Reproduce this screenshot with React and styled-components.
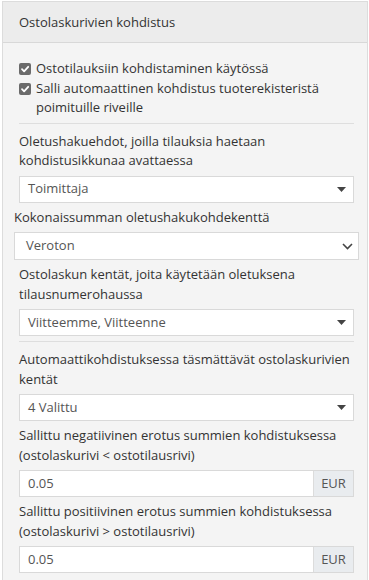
import styled, { createGlobalStyle } from "styled-components"

const GlobalStyle = createGlobalStyle`
  body {
    margin: 0;
    background: #ffffff;
    font-family: "Open Sans", "Liberation Sans", sans-serif;
    font-size: 13px;
    color: #333;
  }
`

function App() {
  return (
    <>
      <GlobalStyle />
      <Panel>
        <PanelHeading>Ostolaskurivien kohdistus</PanelHeading>
        <PanelBody>
          <CheckRow>
            <CheckBox />
            Ostotilauksiin kohdistaminen käytössä
          </CheckRow>
          <CheckRow>
            <CheckBox />
            Salli automaattinen kohdistus tuoterekisteristä poimituille riveille
          </CheckRow>

          <Divider />

          <Label>Oletushakuehdot, joilla tilauksia haetaan kohdistusikkunaa avattaessa</Label>
          <Select>
            <span>Toimittaja</span>
            <Caret />
          </Select>

          <Label $wide>Kokonaissumman oletushakukohdekenttä</Label>
          <Select $wide>
            <span>Veroton</span>
            <Chevron />
          </Select>

          <Label>Ostolaskun kentät, joita käytetään oletuksena tilausnumerohaussa</Label>
          <Select>
            <span>Viitteemme, Viitteenne</span>
            <Caret />
          </Select>

          <Divider />

          <Label>Automaattikohdistuksessa täsmättävät ostolaskurivien kentät</Label>
          <Select>
            <span>4 Valittu</span>
            <Caret />
          </Select>

          <Label>Sallittu negatiivinen erotus summien kohdistuksessa (ostolaskurivi &lt; ostotilausrivi)</Label>
          <InputGroup>
            <InputBox>0.05</InputBox>
            <Addon>EUR</Addon>
          </InputGroup>

          <Label>Sallittu positiivinen erotus summien kohdistuksessa (ostolaskurivi &gt; ostotilausrivi)</Label>
          <InputGroup>
            <InputBox>0.05</InputBox>
            <Addon>EUR</Addon>
          </InputGroup>
        </PanelBody>
      </Panel>
    </>
  )
}

export default App

function CheckBox() {
  return (
    <StyledCheck>
      <svg width="12" height="12" viewBox="0 0 12 12">
        <rect x="0" y="0" width="12" height="12" rx="2" fill="#6b6b6b" />
        <path d="M3 6.2 L5.1 8.3 L9.2 3.8" stroke="#fff" strokeWidth="1.8" fill="none" strokeLinecap="round" strokeLinejoin="round" />
      </svg>
    </StyledCheck>
  )
}

function Caret() {
  return (
    <svg width="9" height="5" viewBox="0 0 9 5">
      <path d="M0 0 L9 0 L4.5 5 Z" fill="#444" />
    </svg>
  )
}

function Chevron() {
  return (
    <svg width="11" height="7" viewBox="0 0 11 7">
      <path d="M1 1 L5.5 5.5 L10 1" stroke="#444" strokeWidth="1.6" fill="none" />
    </svg>
  )
}

const Panel = styled.div`
  margin: 1px 1px 0 2px;
  border: 1px solid #dcdcdc;
  background: #f4f4f4;
`

const PanelHeading = styled.div`
  height: 40px;
  line-height: 40px;
  padding: 0 16px;
  background: #ececec;
  border-bottom: 1px solid #d8d8d8;
  color: #333;
`

const PanelBody = styled.div`
  padding: 16px 13px 7px 16px;
  line-height: 19.5px;
`

const CheckRow = styled.div`
  position: relative;
  padding-left: 17px;
  color: #333;
`

const StyledCheck = styled.span`
  position: absolute;
  left: 0;
  top: 4px;
  display: flex;
`

const Divider = styled.hr`
  border: 0;
  border-top: 1px solid #dedede;
  margin: 5px 0 8px 0;
`

const Label = styled.div`
  margin: 0 ${p => (p.$wide ? "-5px" : "0")} 5px;
  color: #333;
`

const Select = styled.div`
  display: flex;
  align-items: center;
  justify-content: space-between;
  height: ${p => (p.$wide ? "28px" : "27px")};
  box-sizing: border-box;
  margin: 0 ${p => (p.$wide ? "-5px" : "0")} 5px;
  padding: 0 ${p => (p.$wide ? "5px" : "7px")} 0 ${p => (p.$wide ? "11px" : "8px")};
  background: #fff;
  border: 1px solid #d9d9d9;
  color: #555;
`

const InputGroup = styled.div`
  display: flex;
  height: 27px;
  margin-bottom: 5px;
  border: 1px solid #d9d9d9;
  box-sizing: border-box;
  background: #fff;
`

const InputBox = styled.div`
  flex: 1;
  display: flex;
  align-items: center;
  padding-left: 8px;
  color: #555;
`

const Addon = styled.div`
  width: 39px;
  display: flex;
  align-items: center;
  justify-content: center;
  background: #e9ecef;
  border-left: 1px solid #dcdcdc;
  color: #555;
`
